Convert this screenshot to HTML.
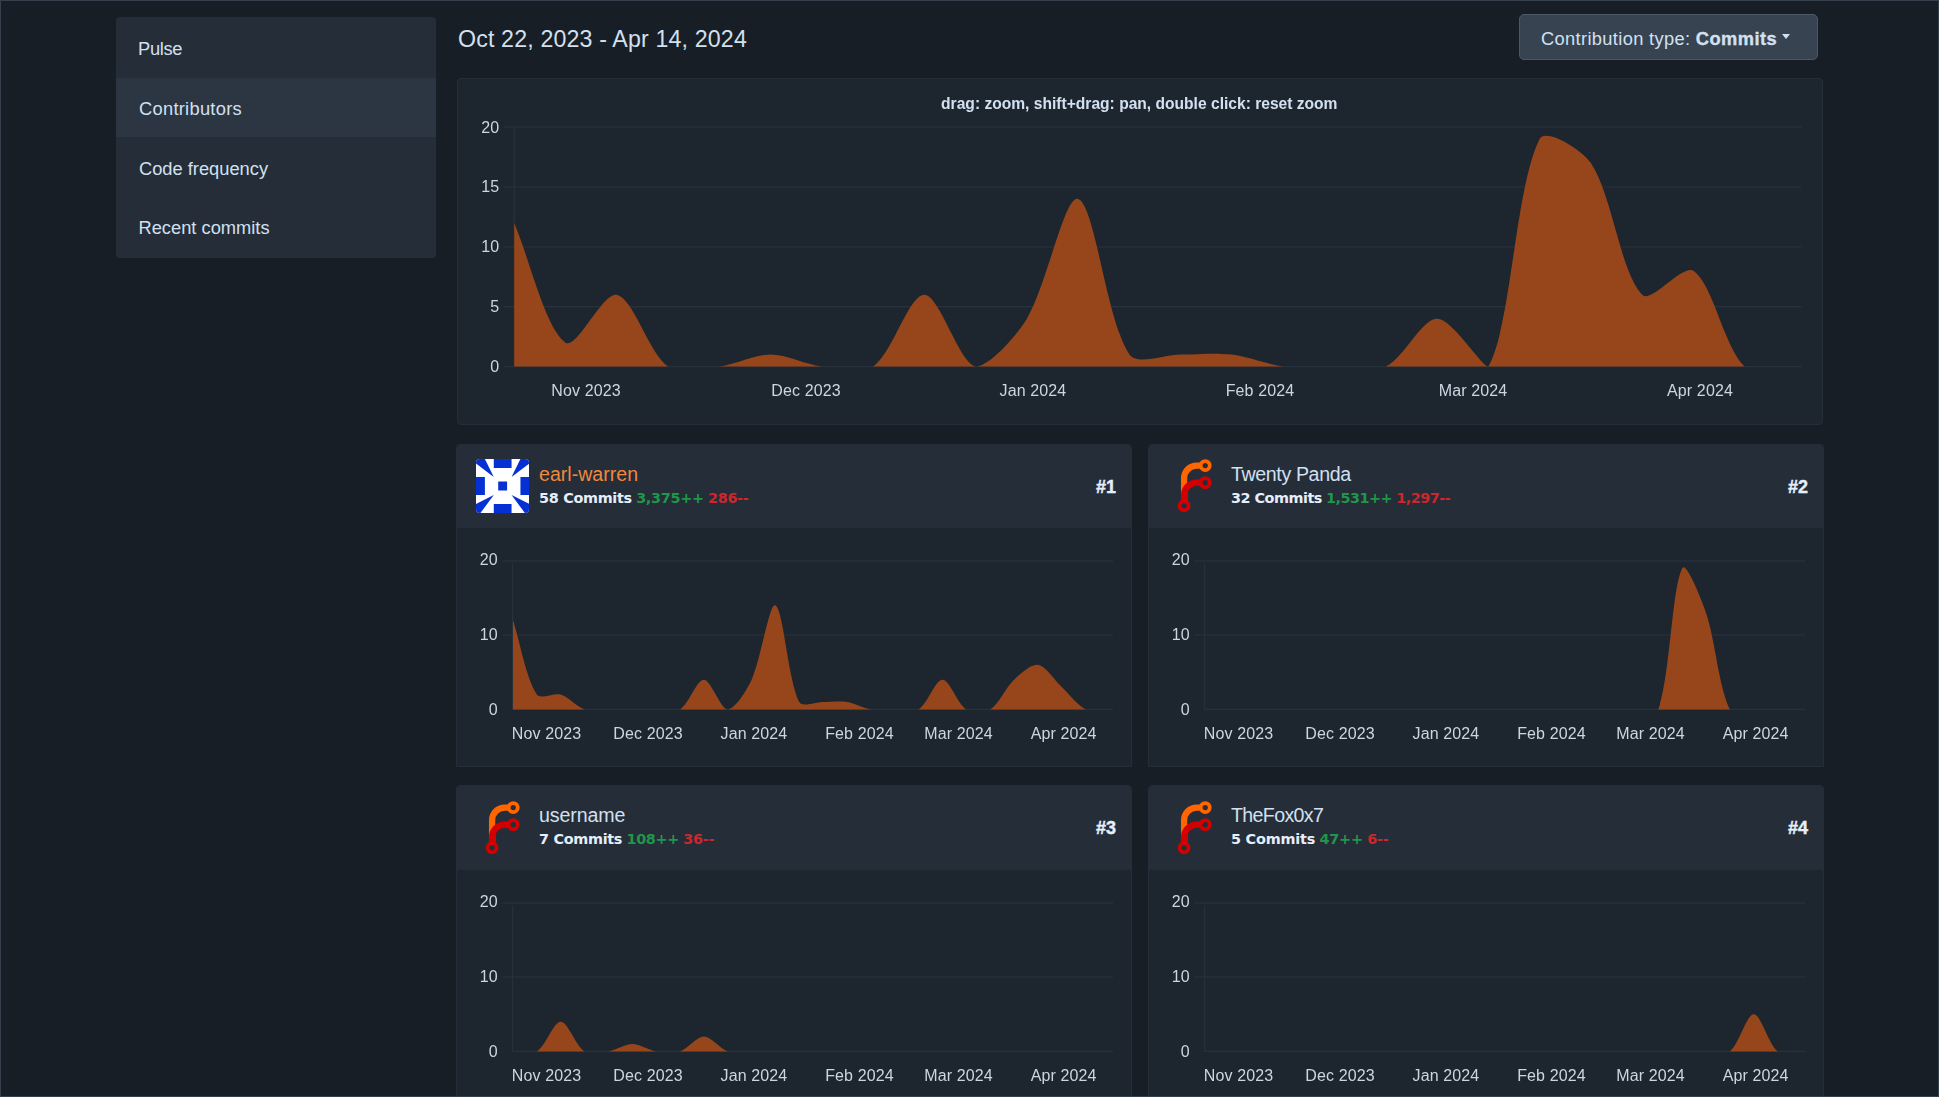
<!DOCTYPE html>
<html lang="en">
<head>
<meta charset="utf-8">
<title>Contributors</title>
<style>
*{box-sizing:border-box;margin:0;padding:0}
html,body{width:1939px;height:1097px;overflow:hidden;background:#171e26}
body{font-family:"Liberation Sans",sans-serif;color:#d2e0f0;position:relative}
.frame{position:absolute;left:0;top:0;width:1939px;height:1097px;border:1px solid #36414d;pointer-events:none;z-index:9}
nav.menu{position:absolute;left:116px;top:17px;width:320px;height:241px;background:#242d38;border-radius:4px;overflow:hidden}
nav.menu a{display:block;height:60px;padding:0 0 0 23px;font-size:18.3px;line-height:61px;overflow:hidden;color:#d2e0f0;white-space:nowrap;text-decoration:none}
nav.menu a.active{background:#2b3642}
main{position:absolute;left:456px;top:0;width:1368px;height:1097px}
h2.range{position:absolute;left:2px;top:25px;font-size:23.2px;font-weight:400;line-height:28px;letter-spacing:.15px;white-space:nowrap;color:#d2e0f0}
.dropdown{position:absolute;left:1063px;top:14px;width:299px;height:46px;background:#374351;border:1px solid #4a5767;border-radius:5px;font-size:18.3px;line-height:48px;padding-left:21px;white-space:nowrap;color:#d2e0f0;letter-spacing:.34px}
.dropdown strong{letter-spacing:.45px;font-weight:700;-webkit-text-stroke:.35px #d2e0f0}
.dropdown .caret{position:absolute;left:262px;top:18.5px;width:0;height:0;border-left:4.6px solid transparent;border-right:4.6px solid transparent;border-top:5px solid #d2e0f0}
.mainchart{position:absolute;left:1px;top:78px;width:1366px;height:347px;background:#1d262f;border:1px solid #242d38;border-radius:4px;overflow:hidden}
svg.chart{display:block;will-change:transform}
svg.chart text{font-family:"Liberation Sans",sans-serif;font-size:16px;letter-spacing:.12px;fill:#cbd6e2}
svg.chart text.ctitle{font-weight:700;font-size:15.6px;letter-spacing:0;fill:#d2e0f0}
.card{position:absolute;width:676px;height:323px;border:1px solid #242d38;border-radius:4px 4px 0 0;background:#1d262f;overflow:hidden}
.card-head{position:relative;height:83px;background:#242d38}
.card-head .avatar{position:absolute;left:19px;top:14px;border-radius:4px}
.who{position:absolute;left:82px;top:0}
.name{position:absolute;left:0;top:17px;font-size:19.6px;line-height:24px;white-space:nowrap;color:#d2e0f0}
.name.link{color:#f0883e}
.stats{position:absolute;left:0;top:43px;font-family:"DejaVu Sans","Liberation Sans",sans-serif;font-size:14.4px;line-height:20px;white-space:nowrap;color:#e6eefa}
.stats strong{font-weight:700}
.add{color:#21964a}
.del{color:#cb272c}
.rank{position:absolute;right:15px;top:30px;font-size:18px;font-weight:700;line-height:24px;color:#e6eefa;-webkit-text-stroke:.4px #e6eefa}
.card-body{position:relative;height:238px}
</style>
</head>
<body>
<div class="frame"></div>
<nav class="menu">
<a style="height:61px;line-height:63px;letter-spacing:-.3px;padding-left:22px">Pulse</a>
<a class="active" style="height:59px;line-height:61.6px;letter-spacing:.28px">Contributors</a>
<a style="height:60px;line-height:63px">Code frequency</a>
<a style="height:61px;line-height:61px;padding-left:22.5px">Recent commits</a>
</nav>
<main>
<h2 class="range">Oct 22, 2023 - Apr 14, 2024</h2>
<div class="dropdown"><span class="lbl">Contribution type: </span><strong>Commits</strong><i class="caret"></i></div>
<div class="mainchart">
<svg class="chart" width="1364" height="345" viewBox="0 0 1364 345">
<g stroke="#27313b" stroke-width="1.3">
<line x1="45.7" x2="1343.5" y1="48.10" y2="48.10"/>
<line x1="45.7" x2="1343.5" y1="107.97" y2="107.97"/>
<line x1="45.7" x2="1343.5" y1="167.85" y2="167.85"/>
<line x1="45.7" x2="1343.5" y1="227.73" y2="227.73"/>
<line x1="45.7" x2="1343.5" y1="287.60" y2="287.60"/>
<line x1="56.2" x2="56.2" y1="49.0" y2="288.2"/>
</g>
<path d="M56.20 287.60L56.20 143.90C71.58 179.83 87.48 249.64 107.47 263.65C118.24 271.20 145.12 212.57 158.74 215.75C175.88 219.75 190.55 273.96 210.01 287.60C221.31 287.60 246.10 287.60 261.28 287.60C276.87 285.78 297.17 275.62 312.55 275.62C327.93 275.62 348.23 285.78 363.82 287.60C379.00 287.60 403.79 287.60 415.09 287.60C434.55 273.96 450.98 215.75 466.36 215.75C481.74 215.75 500.49 283.60 517.63 287.60C531.25 287.60 558.13 257.31 568.90 239.70C588.89 207.01 606.55 115.18 620.17 119.95C637.31 125.95 648.01 240.05 671.44 275.62C678.77 286.75 707.33 275.62 722.71 275.62C738.09 275.62 758.80 273.85 773.98 275.62C789.57 277.45 809.66 285.78 825.25 287.60C840.43 287.60 861.14 287.60 876.52 287.60C891.90 287.60 914.80 287.60 927.79 287.60C945.56 279.30 963.68 239.70 979.06 239.70C994.44 239.70 1023.22 287.60 1030.33 287.60C1053.98 246.17 1056.84 109.22 1081.60 60.07C1087.61 48.15 1124.08 70.67 1132.87 84.03C1154.84 117.38 1162.17 192.66 1184.14 215.75C1192.93 224.99 1224.88 184.42 1235.41 191.80C1255.64 205.97 1265.78 268.07 1286.68 287.60C1296.54 287.60 1322.57 287.60 1337.95 287.60L1337.95 287.60 Z" fill="#97451b"/>
<text x="41.2" y="53.6" text-anchor="end">20</text>
<text x="41.2" y="113.3" text-anchor="end">15</text>
<text x="41.2" y="173.0" text-anchor="end">10</text>
<text x="41.2" y="232.8" text-anchor="end">5</text>
<text x="41.2" y="292.5" text-anchor="end">0</text>
<text x="128.0" y="316.8" text-anchor="middle">Nov 2023</text>
<text x="348.0" y="316.8" text-anchor="middle">Dec 2023</text>
<text x="575.0" y="316.8" text-anchor="middle">Jan 2024</text>
<text x="802.0" y="316.8" text-anchor="middle">Feb 2024</text>
<text x="1015.0" y="316.8" text-anchor="middle">Mar 2024</text>
<text x="1242.0" y="316.8" text-anchor="middle">Apr 2024</text>
<text class="ctitle" x="681.3" y="29.9" text-anchor="middle">drag: zoom, shift+drag: pan, double click: reset zoom</text>
</svg>
</div>
<section class="card" style="left:0px;top:444px">
<header class="card-head"><svg class="avatar ident" width="53.33" height="54" viewBox="0 0 6 6" preserveAspectRatio="none"><rect width="6" height="6" fill="#fff"/><g fill="#0530d3"><rect x="2" y="0" width="2" height="1"/><rect x="2" y="5" width="2" height="1"/><rect x="0" y="2" width="1" height="2"/><rect x="5" y="2" width="1" height="2"/><rect x="2.5" y="2.5" width="1" height="1"/><path d="M0 0H1L2 2L0 .5Z"/><path d="M6 0H5L4 2L6 .5Z"/><path d="M0 6V5L2 4L.5 6Z"/><path d="M6 6V5L4 4L5.5 6Z"/></g></svg><div class="who"><a class="name link" style="letter-spacing:0px">earl-warren</a><p class="stats" style="letter-spacing:-0.3px"><strong>58 Commits</strong> <strong class="add">3,375++</strong> <strong class="del">286--</strong></p></div><span class="rank">#1</span></header>
<div class="card-body"><svg class="chart" width="674" height="238" viewBox="0 0 674 238">
<g stroke="#27313b" stroke-width="1.3">
<line x1="45.5" x2="656.1" y1="33.00" y2="33.00"/>
<line x1="45.5" x2="656.1" y1="106.90" y2="106.90"/>
<line x1="56.0" x2="656.1" y1="181.40" y2="181.40"/>
<line x1="55.5" x2="55.5" y1="35.5" y2="182.0"/>
</g>
<path d="M56.00 181.40L56.00 92.30C63.16 114.58 68.90 149.49 79.86 166.55C83.21 171.77 97.15 164.50 103.72 166.55C111.46 168.96 119.84 178.99 127.58 181.40C134.15 181.40 144.28 181.40 151.44 181.40C158.60 181.40 168.14 181.40 175.30 181.40C182.46 181.40 192.00 181.40 199.16 181.40C206.32 181.40 217.51 181.40 223.02 181.40C231.82 175.92 239.72 151.70 246.88 151.70C254.04 151.70 263.58 181.40 270.74 181.40C277.90 181.40 289.90 161.93 294.60 151.70C304.22 130.75 312.17 74.51 318.46 77.45C326.48 81.20 330.77 150.62 342.32 173.97C345.09 179.58 359.02 173.97 366.18 173.97C373.34 173.97 383.05 172.89 390.04 173.97C397.36 175.11 406.58 180.26 413.90 181.40C420.89 181.40 430.60 181.40 437.76 181.40C444.92 181.40 456.11 181.40 461.62 181.40C470.42 175.92 478.32 151.70 485.48 151.70C492.64 151.70 500.54 175.92 509.34 181.40C514.85 181.40 527.69 181.40 533.20 181.40C542.00 175.92 548.82 159.39 557.06 151.70C563.14 146.03 574.30 135.82 580.92 136.85C588.61 138.05 597.62 152.44 604.78 159.12C611.94 165.81 620.37 177.54 628.64 181.40C634.69 181.40 645.34 181.40 652.50 181.40L652.50 181.40 Z" fill="#97451b"/>
<text x="40.9" y="36.7" text-anchor="end">20</text>
<text x="40.9" y="111.8" text-anchor="end">10</text>
<text x="40.9" y="186.7" text-anchor="end">0</text>
<text x="89.6" y="211.2" text-anchor="middle">Nov 2023</text>
<text x="191.0" y="211.2" text-anchor="middle">Dec 2023</text>
<text x="297.0" y="211.2" text-anchor="middle">Jan 2024</text>
<text x="402.5" y="211.2" text-anchor="middle">Feb 2024</text>
<text x="501.5" y="211.2" text-anchor="middle">Mar 2024</text>
<text x="606.7" y="211.2" text-anchor="middle">Apr 2024</text>
</svg></div>
</section>
<section class="card" style="left:692px;top:444px">
<header class="card-head"><svg class="avatar" width="53.33" height="53.33" viewBox="0 0 212 212"><g transform="translate(6,6)" fill="none"><path d="M58 168V70a50 50 0 0 1 50-50h20" stroke="#ff6600" stroke-width="25"/><path d="M58 168v-30a50 50 0 0 1 50-50h20" stroke="#d40000" stroke-width="25"/><circle cx="142" cy="20" r="18" stroke="#ff6600" stroke-width="15"/><circle cx="142" cy="88" r="18" stroke="#d40000" stroke-width="15"/><circle cx="58" cy="180" r="18" stroke="#d40000" stroke-width="15"/></g></svg><div class="who"><a class="name " style="letter-spacing:-0.37px">Twenty Panda</a><p class="stats" style="letter-spacing:-0.5px"><strong>32 Commits</strong> <strong class="add">1,531++</strong> <strong class="del">1,297--</strong></p></div><span class="rank">#2</span></header>
<div class="card-body"><svg class="chart" width="674" height="238" viewBox="0 0 674 238">
<g stroke="#27313b" stroke-width="1.3">
<line x1="45.5" x2="656.1" y1="33.00" y2="33.00"/>
<line x1="45.5" x2="656.1" y1="106.90" y2="106.90"/>
<line x1="56.0" x2="656.1" y1="181.40" y2="181.40"/>
<line x1="55.5" x2="55.5" y1="35.5" y2="182.0"/>
</g>
<path d="M56.00 181.40L56.00 181.40C63.16 181.40 72.70 181.40 79.86 181.40C87.02 181.40 96.56 181.40 103.72 181.40C110.88 181.40 120.42 181.40 127.58 181.40C134.74 181.40 144.28 181.40 151.44 181.40C158.60 181.40 168.14 181.40 175.30 181.40C182.46 181.40 192.00 181.40 199.16 181.40C206.32 181.40 215.86 181.40 223.02 181.40C230.18 181.40 239.72 181.40 246.88 181.40C254.04 181.40 263.58 181.40 270.74 181.40C277.90 181.40 287.44 181.40 294.60 181.40C301.76 181.40 311.30 181.40 318.46 181.40C325.62 181.40 335.16 181.40 342.32 181.40C349.48 181.40 359.02 181.40 366.18 181.40C373.34 181.40 382.88 181.40 390.04 181.40C397.20 181.40 406.74 181.40 413.90 181.40C421.06 181.40 430.60 181.40 437.76 181.40C444.92 181.40 454.46 181.40 461.62 181.40C468.78 181.40 478.32 181.40 485.48 181.40C492.64 181.40 507.29 181.40 509.34 181.40C521.61 145.13 522.62 61.72 533.20 40.33C536.94 32.90 552.24 70.61 557.06 84.88C566.55 112.94 569.37 158.05 580.92 181.40C583.69 181.40 597.62 181.40 604.78 181.40C611.94 181.40 621.48 181.40 628.64 181.40C635.80 181.40 645.34 181.40 652.50 181.40L652.50 181.40 Z" fill="#97451b"/>
<text x="40.9" y="36.7" text-anchor="end">20</text>
<text x="40.9" y="111.8" text-anchor="end">10</text>
<text x="40.9" y="186.7" text-anchor="end">0</text>
<text x="89.6" y="211.2" text-anchor="middle">Nov 2023</text>
<text x="191.0" y="211.2" text-anchor="middle">Dec 2023</text>
<text x="297.0" y="211.2" text-anchor="middle">Jan 2024</text>
<text x="402.5" y="211.2" text-anchor="middle">Feb 2024</text>
<text x="501.5" y="211.2" text-anchor="middle">Mar 2024</text>
<text x="606.7" y="211.2" text-anchor="middle">Apr 2024</text>
</svg></div>
</section>
<section class="card" style="left:0px;top:785px">
<header class="card-head" style="height:84px"><svg class="avatar" style="top:14.5px" width="53.33" height="53.33" viewBox="0 0 212 212"><g transform="translate(6,6)" fill="none"><path d="M58 168V70a50 50 0 0 1 50-50h20" stroke="#ff6600" stroke-width="25"/><path d="M58 168v-30a50 50 0 0 1 50-50h20" stroke="#d40000" stroke-width="25"/><circle cx="142" cy="20" r="18" stroke="#ff6600" stroke-width="15"/><circle cx="142" cy="88" r="18" stroke="#d40000" stroke-width="15"/><circle cx="58" cy="180" r="18" stroke="#d40000" stroke-width="15"/></g></svg><div class="who"><a class="name " style="letter-spacing:-0.1px">username</a><p class="stats" style="letter-spacing:-0.3px"><strong>7 Commits</strong> <strong class="add">108++</strong> <strong class="del">36--</strong></p></div><span class="rank">#3</span></header>
<div class="card-body"><svg class="chart" width="674" height="238" viewBox="0 0 674 238">
<g stroke="#27313b" stroke-width="1.3">
<line x1="45.5" x2="656.1" y1="33.00" y2="33.00"/>
<line x1="45.5" x2="656.1" y1="106.90" y2="106.90"/>
<line x1="56.0" x2="656.1" y1="181.40" y2="181.40"/>
<line x1="55.5" x2="55.5" y1="35.5" y2="182.0"/>
</g>
<path d="M56.00 181.40L56.00 181.40C63.16 181.40 74.35 181.40 79.86 181.40C88.66 175.92 96.56 151.70 103.72 151.70C110.88 151.70 118.78 175.92 127.58 181.40C133.09 181.40 144.45 181.40 151.44 181.40C158.76 180.26 168.14 173.97 175.30 173.97C182.46 173.97 191.84 180.26 199.16 181.40C206.15 181.40 216.45 181.40 223.02 181.40C230.76 178.99 239.72 166.55 246.88 166.55C254.04 166.55 263.00 178.99 270.74 181.40C277.31 181.40 287.44 181.40 294.60 181.40C301.76 181.40 311.30 181.40 318.46 181.40C325.62 181.40 335.16 181.40 342.32 181.40C349.48 181.40 359.02 181.40 366.18 181.40C373.34 181.40 382.88 181.40 390.04 181.40C397.20 181.40 406.74 181.40 413.90 181.40C421.06 181.40 430.60 181.40 437.76 181.40C444.92 181.40 454.46 181.40 461.62 181.40C468.78 181.40 478.32 181.40 485.48 181.40C492.64 181.40 502.18 181.40 509.34 181.40C516.50 181.40 526.04 181.40 533.20 181.40C540.36 181.40 549.90 181.40 557.06 181.40C564.22 181.40 573.76 181.40 580.92 181.40C588.08 181.40 597.62 181.40 604.78 181.40C611.94 181.40 621.48 181.40 628.64 181.40C635.80 181.40 645.34 181.40 652.50 181.40L652.50 181.40 Z" fill="#97451b"/>
<text x="40.9" y="36.7" text-anchor="end">20</text>
<text x="40.9" y="111.8" text-anchor="end">10</text>
<text x="40.9" y="186.7" text-anchor="end">0</text>
<text x="89.6" y="211.2" text-anchor="middle">Nov 2023</text>
<text x="191.0" y="211.2" text-anchor="middle">Dec 2023</text>
<text x="297.0" y="211.2" text-anchor="middle">Jan 2024</text>
<text x="402.5" y="211.2" text-anchor="middle">Feb 2024</text>
<text x="501.5" y="211.2" text-anchor="middle">Mar 2024</text>
<text x="606.7" y="211.2" text-anchor="middle">Apr 2024</text>
</svg></div>
</section>
<section class="card" style="left:692px;top:785px">
<header class="card-head" style="height:84px"><svg class="avatar" style="top:14.5px" width="53.33" height="53.33" viewBox="0 0 212 212"><g transform="translate(6,6)" fill="none"><path d="M58 168V70a50 50 0 0 1 50-50h20" stroke="#ff6600" stroke-width="25"/><path d="M58 168v-30a50 50 0 0 1 50-50h20" stroke="#d40000" stroke-width="25"/><circle cx="142" cy="20" r="18" stroke="#ff6600" stroke-width="15"/><circle cx="142" cy="88" r="18" stroke="#d40000" stroke-width="15"/><circle cx="58" cy="180" r="18" stroke="#d40000" stroke-width="15"/></g></svg><div class="who"><a class="name " style="letter-spacing:-0.65px">TheFox0x7</a><p class="stats" style="letter-spacing:-0.2px"><strong>5 Commits</strong> <strong class="add">47++</strong> <strong class="del">6--</strong></p></div><span class="rank">#4</span></header>
<div class="card-body"><svg class="chart" width="674" height="238" viewBox="0 0 674 238">
<g stroke="#27313b" stroke-width="1.3">
<line x1="45.5" x2="656.1" y1="33.00" y2="33.00"/>
<line x1="45.5" x2="656.1" y1="106.90" y2="106.90"/>
<line x1="56.0" x2="656.1" y1="181.40" y2="181.40"/>
<line x1="55.5" x2="55.5" y1="35.5" y2="182.0"/>
</g>
<path d="M56.00 181.40L56.00 181.40C63.16 181.40 72.70 181.40 79.86 181.40C87.02 181.40 96.56 181.40 103.72 181.40C110.88 181.40 120.42 181.40 127.58 181.40C134.74 181.40 144.28 181.40 151.44 181.40C158.60 181.40 168.14 181.40 175.30 181.40C182.46 181.40 192.00 181.40 199.16 181.40C206.32 181.40 215.86 181.40 223.02 181.40C230.18 181.40 239.72 181.40 246.88 181.40C254.04 181.40 263.58 181.40 270.74 181.40C277.90 181.40 287.44 181.40 294.60 181.40C301.76 181.40 311.30 181.40 318.46 181.40C325.62 181.40 335.16 181.40 342.32 181.40C349.48 181.40 359.02 181.40 366.18 181.40C373.34 181.40 382.88 181.40 390.04 181.40C397.20 181.40 406.74 181.40 413.90 181.40C421.06 181.40 430.60 181.40 437.76 181.40C444.92 181.40 454.46 181.40 461.62 181.40C468.78 181.40 478.32 181.40 485.48 181.40C492.64 181.40 502.18 181.40 509.34 181.40C516.50 181.40 526.04 181.40 533.20 181.40C540.36 181.40 549.90 181.40 557.06 181.40C564.22 181.40 575.90 181.40 580.92 181.40C590.21 174.17 597.62 144.28 604.78 144.28C611.94 144.28 619.35 174.17 628.64 181.40C633.66 181.40 645.34 181.40 652.50 181.40L652.50 181.40 Z" fill="#97451b"/>
<text x="40.9" y="36.7" text-anchor="end">20</text>
<text x="40.9" y="111.8" text-anchor="end">10</text>
<text x="40.9" y="186.7" text-anchor="end">0</text>
<text x="89.6" y="211.2" text-anchor="middle">Nov 2023</text>
<text x="191.0" y="211.2" text-anchor="middle">Dec 2023</text>
<text x="297.0" y="211.2" text-anchor="middle">Jan 2024</text>
<text x="402.5" y="211.2" text-anchor="middle">Feb 2024</text>
<text x="501.5" y="211.2" text-anchor="middle">Mar 2024</text>
<text x="606.7" y="211.2" text-anchor="middle">Apr 2024</text>
</svg></div>
</section>
</main>
</body>
</html>
